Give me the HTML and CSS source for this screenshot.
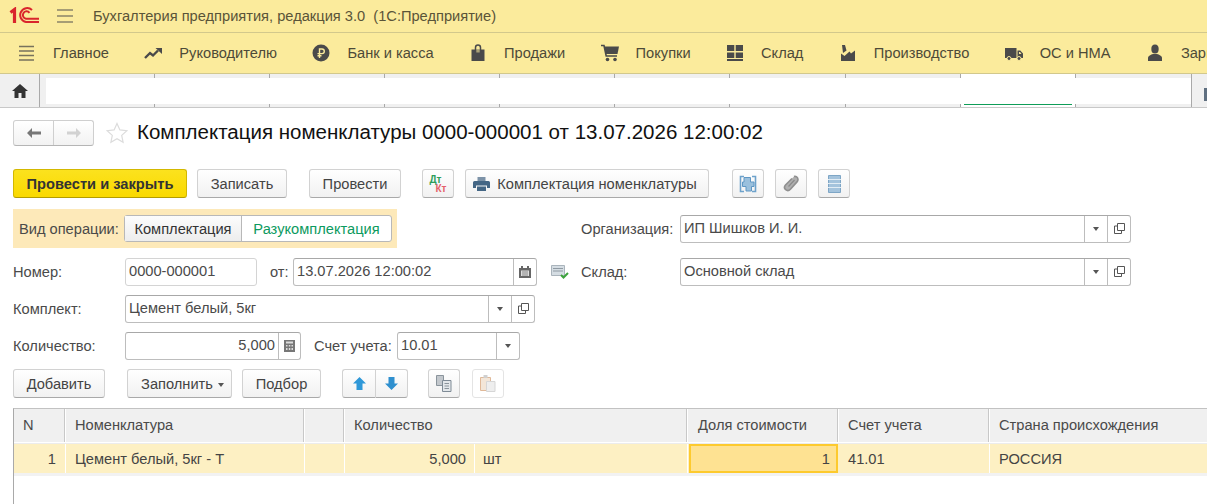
FILE: index.html
```html
<!DOCTYPE html>
<html lang="ru">
<head>
    <meta charset="UTF-8">
    <title>Комплектация номенклатуры</title>
    <link rel="stylesheet" href="styles.css">
</head>
<body>
    <div class="app-head">
        <svg class="logo" width="32" height="18" viewBox="0 0 32 18">
            <path d="M1.500 5.500L5.500 2.500V16" fill="none" stroke="#d9252c" stroke-width="3.200"/>
            <path d="M23 3A7 7 0 1 0 17 15H30" fill="none" stroke="#d9252c" stroke-width="2"/>
            <path d="M20.500 5.800A3.700 3.700 0 1 0 17 11.700H30" fill="none" stroke="#d9252c" stroke-width="2"/>
        </svg>
        <svg class="head-menu" width="16" height="14" viewBox="0 0 16 14">
            <path d="M0 1h16M0 7h16M0 13h16" stroke="#8b8468" stroke-width="1.600"/>
        </svg>
        <span class="app-title">Бухгалтерия предприятия, редакция 3.0&nbsp; (1С:Предприятие)</span>
    </div>

    <div class="sections">
        <a class="sec" href="#">
            <svg width="18" height="16" viewBox="0 0 18 16"><path d="M1 1.500h15M1 6h15M1 10.500h15M1 15h15" stroke="#77725c" stroke-width="1.600"/></svg>
            Главное
        </a>
        <a class="sec" href="#">
            <svg width="18" height="14" viewBox="0 0 18 14"><path d="M1 12l5-5 3 2.500 5-5" fill="none" stroke="#4a4a4a" stroke-width="2.400"/><path d="M11.500 2H18v6z" fill="#4a4a4a"/></svg>
            Руководителю
        </a>
        <a class="sec" href="#">
            <svg width="18" height="18" viewBox="0 0 18 18"><circle cx="9" cy="9" r="8.500" fill="#4a4a4a"/><path d="M7.500 14V5H10a2.300 2.300 0 0 1 0 4.600H5.500M5.500 11.800h4" fill="none" stroke="#fbeb9c" stroke-width="1.400"/></svg>
            Банк и касса
        </a>
        <a class="sec" href="#">
            <svg width="18" height="18" viewBox="0 0 18 18"><path d="M2.500 5.500h13V17h-13z" fill="#4a4a4a"/><path d="M6.500 9V3.500a2.500 2.500 0 0 1 5 0V9" fill="none" stroke="#4a4a4a" stroke-width="1.500"/><path d="M7.300 5.500h3.400v3h-3.400z" fill="#fbeb9c" opacity=".55"/></svg>
            Продажи
        </a>
        <a class="sec" href="#">
            <svg width="18" height="18" viewBox="0 0 18 18"><path d="M3 2.500h15l-1.500 7.500H5z" fill="#4a4a4a"/><path d="M0 1.500h3l2.200 10.500H16" fill="none" stroke="#4a4a4a" stroke-width="1.600"/><circle cx="6.500" cy="15.500" r="1.800" fill="#4a4a4a"/><circle cx="14" cy="15.500" r="1.800" fill="#4a4a4a"/></svg>
            Покупки
        </a>
        <a class="sec" href="#">
            <svg width="18" height="18" viewBox="0 0 18 18"><path d="M1 1h7.300v6H1zM9.700 1H17v6H9.700zM1 8.400h7.300v5.600H1zM9.700 8.400H17v5.600H9.700z" fill="#4a4a4a"/><path d="M1 16h16" stroke="#4a4a4a" stroke-width="2"/></svg>
            Склад
        </a>
        <a class="sec" href="#">
            <svg width="18" height="18" viewBox="0 0 18 18"><path d="M2 17V9.500L5.500 12l5-4.500 1.500 2 4-3V17z" fill="#4a4a4a"/><path d="M3 1l3 0 1.500 5.500L4 9z" fill="#4a4a4a"/></svg>
            Производство
        </a>
        <a class="sec" href="#">
            <svg width="18" height="18" viewBox="0 0 18 18"><path d="M0 4h11.500v10H0zM12.500 6.500h2.800L18 9.500V14h-5.500z" fill="#4a4a4a"/><path d="M14 8h1l1.500 2H14z" fill="#fbeb9c"/><circle cx="4" cy="14.500" r="2" fill="#4a4a4a" stroke="#fbeb9c"/><circle cx="14" cy="14.500" r="2" fill="#4a4a4a" stroke="#fbeb9c"/></svg>
            ОС и НМА
        </a>
        <a class="sec" href="#">
            <svg width="18" height="18" viewBox="0 0 18 18"><ellipse cx="9" cy="5" rx="3.700" ry="4.500" fill="#4a4a4a"/><path d="M2 17v-3c0-2 3-3.500 5-4h4c2 .5 5 2 5 4v3z" fill="#4a4a4a"/></svg>
            Зарплата и кадры
        </a>
    </div>

    <div class="tabbar">
        <div class="tab-home">
            <svg width="16" height="14" viewBox="0 0 16 14"><path d="M8 0L0 7h2.500v7h4V9h3v5h4V7H16z" fill="#333"/></svg>
        </div>
        <div class="tab-gap"></div>
        <div class="tab-list">
            <div class="tick-row">
                <i class="tick t1"></i><i class="tick"></i><i class="tick"></i><i class="tick"></i><i class="tick"></i><i class="tick"></i><i class="tick"></i><i class="tick"></i><i class="tick tick-on"></i><i class="tick tick-last"></i>
            </div>
            <div class="tab-white"></div>
            <div class="tick-row">
                <i class="tick t1"></i><i class="tick"></i><i class="tick"></i><i class="tick"></i><i class="tick"></i><i class="tick"></i><i class="tick"></i><i class="tick"></i><i class="tick tick-on tick-green"></i><i class="tick tick-last"></i>
            </div>
        </div>
        <div class="tab-end"><i class="tab-end-mark"></i></div>
    </div>

    <div class="form">
        <div class="title-row">
            <div class="nav-btns">
                <span class="nav-btn">
                    <svg width="14" height="10" viewBox="0 0 14 10"><path d="M5 0v3.500h9v3H5V10L0 5z" fill="#777"/></svg>
                </span>
                <span class="nav-btn">
                    <svg width="14" height="10" viewBox="0 0 14 10"><path d="M9 0v3.500H0v3h9V10l5-5z" fill="#d2d2d2"/></svg>
                </span>
            </div>
            <svg class="star" width="22" height="22" viewBox="0 0 22 22"><path d="M11 1.500l2.900 6.400 6.900.8-5.100 4.700 1.400 6.900L11 16.800l-6.100 3.500 1.400-6.900L1.200 8.700l6.900-.8z" fill="#fff" stroke="#dcdcdc" stroke-width="1.200"/></svg>
            <h1 class="doc-title">Комплектация номенклатуры 0000-000001 от 13.07.2026 12:00:02</h1>
        </div>

        <div class="cmd-row">
            <a class="btn btn-main w-post-close" href="#">Провести и закрыть</a>
            <a class="btn w-save" href="#">Записать</a>
            <a class="btn w-post" href="#">Провести</a>
            <a class="btn w-dtkt" href="#"><span class="dtkt"><span class="dt">Дт</span><span class="kt">Кт</span></span></a>
            <a class="btn w-print" href="#">
                <svg width="17" height="14" viewBox="0 0 17 14"><path d="M4.500 0h8v4h-8z" fill="#7d93a8"/><path d="M1.500 4h14a1.500 1.500 0 0 1 1.500 1.500V11h-3V8.500H3V11H0V5.500A1.500 1.500 0 0 1 1.500 4z" fill="#446685"/><path d="M4 9.500h9V14H4z" fill="#446685"/></svg>
                Комплектация номенклатуры
            </a>
            <a class="btn w-icon mgl-link" href="#">
                <svg width="18" height="18" viewBox="0 0 18 18"><path d="M5 1.500H1.500v15H5M13 1.500h3.500v15H13" fill="none" stroke="#6ea2cb" stroke-width="1.600"/><path d="M5 2.500h6.500v4.500H15v4.500h-2.500V16H7v-4.500H3.500V7H5z" fill="#9ac0dd" stroke="#5f97c4"/></svg>
            </a>
            <a class="btn w-icon mgl-clip" href="#">
                <svg width="17" height="17" viewBox="0 0 17 17"><path d="M11 1.500c1.800-.6 4 .8 4 3 0 1-.5 1.800-1 2.400l-6.600 7.300c-1.200 1.300-3.200 1.700-4.700.5-1.500-1.300-1.300-3.400-.2-4.700L9 3.500" fill="#b0b0b0" stroke="#8f8f8f" stroke-width="1.600"/><path d="M11.500 5L5.500 11.500" stroke="#8a8a8a" stroke-width="1.200"/></svg>
            </a>
            <a class="btn w-icon mgl-list" href="#">
                <svg width="13" height="18" viewBox="0 0 13 18"><path d="M.5.500h12v17H.5z" fill="#a4c3dc" stroke="#7ea6c6"/><path d="M0 4.500h13M0 8.500h13M0 12.500h13" stroke="#e2edf5"/></svg>
            </a>
        </div>

        <div class="row row-op">
            <div class="op-box">
                <span class="op-label">Вид операции:</span>
                <div class="toggle">
                    <span class="toggle-item toggle-on">Комплектация</span>
                    <span class="toggle-item toggle-off">Разукомплектация</span>
                </div>
            </div>
            <span class="lbl lbl-right lbl-org">Организация:</span>
            <div class="field w-wide">
                <span class="field-text">ИП Шишков И. И.</span>
                <span class="field-btn"><i class="caret"></i></span>
                <span class="field-btn"><svg width="11" height="11" viewBox="0 0 11 11"><path d="M3.500.5h7v7h-7zM3.500 3H.5v7.500h7V8" fill="none" stroke="#555"/></svg></span>
            </div>
        </div>

        <div class="row row-num">
            <span class="lbl lbl-left">Номер:</span>
            <div class="field w-num"><span class="field-text">0000-000001</span></div>
            <span class="lbl lbl-ot">от:</span>
            <div class="field w-date">
                <span class="field-text">13.07.2026 12:00:02</span>
                <span class="field-btn field-btn-cal">
                    <svg width="12" height="12" viewBox="0 0 12 12"><path d="M0 2h12v10H0z" fill="#666"/><path d="M2 4.500h8v5.500H2z" fill="#ddd"/><path d="M3 0v3M9 0v3" stroke="#666" stroke-width="2"/><path d="M4 5v5M6 5v5M8 5v5" stroke="#888"/></svg>
                </span>
            </div>
            <svg class="status" width="18" height="15" viewBox="0 0 18 15"><path d="M.5 1.500h13v10H.5z" fill="#d5dde3" stroke="#aab4bc"/><path d="M2 4.500h10M2 7h10" stroke="#8f9aa3"/><path d="M10 11l2.500 2.500L17 9" fill="none" stroke="#3da33d" stroke-width="2"/></svg>
            <span class="lbl lbl-right lbl-sklad">Склад:</span>
            <div class="field w-wide">
                <span class="field-text">Основной склад</span>
                <span class="field-btn"><i class="caret"></i></span>
                <span class="field-btn"><svg width="11" height="11" viewBox="0 0 11 11"><path d="M3.500.5h7v7h-7zM3.500 3H.5v7.500h7V8" fill="none" stroke="#555"/></svg></span>
            </div>
        </div>

        <div class="row row-kit">
            <span class="lbl lbl-left">Комплект:</span>
            <div class="field w-kit">
                <span class="field-text">Цемент белый, 5кг</span>
                <span class="field-btn"><i class="caret"></i></span>
                <span class="field-btn"><svg width="11" height="11" viewBox="0 0 11 11"><path d="M3.500.5h7v7h-7zM3.500 3H.5v7.500h7V8" fill="none" stroke="#555"/></svg></span>
            </div>
        </div>

        <div class="row row-qty">
            <span class="lbl lbl-left">Количество:</span>
            <div class="field w-qty">
                <span class="field-text field-right">5,000</span>
                <span class="field-btn field-btn-calc">
                    <svg width="11" height="12" viewBox="0 0 11 12"><path d="M0 0h11v12H0z" fill="#777"/><path d="M2 1.500h7v2H2zM2 5h1.500v1.500H2zM4.800 5h1.500v1.500H4.800zM7.500 5H9v1.500H7.500zM2 8h1.500v2H2zM4.800 8h1.500v2H4.800zM7.500 8H9v2H7.500z" fill="#ddd"/></svg>
                </span>
            </div>
            <span class="lbl lbl-acc">Счет учета:</span>
            <div class="field w-acc">
                <span class="field-text">10.01</span>
                <span class="field-btn"><i class="caret"></i></span>
            </div>
        </div>

        <div class="row row-act">
            <a class="btn w-add" href="#">Добавить</a>
            <a class="btn w-fill" href="#">Заполнить<i class="caret caret-small"></i></a>
            <a class="btn w-pick" href="#">Подбор</a>
            <div class="btn-group">
                <a class="btn w-arrow" href="#"><svg width="13" height="13" viewBox="0 0 13 13"><path d="M6.500 0L13 6.500H9.500V13h-6V6.500H0z" fill="#2f98d8"/></svg></a>
                <a class="btn w-arrow" href="#"><svg width="13" height="13" viewBox="0 0 13 13"><path d="M6.500 13L13 6.500H9.500V0h-6v6.500H0z" fill="#2f90cf"/></svg></a>
            </div>
            <a class="btn w-icon-s mgl-copy" href="#">
                <svg width="16" height="17" viewBox="0 0 16 17"><path d="M.5.500h7v10h-7z" fill="#c3c8cd" stroke="#8a949c"/><path d="M6.500 5.500h8.500v11H6.500z" fill="#e3e7ea" stroke="#7f8b96"/><path d="M8.500 8.500h4.500M8.500 11h4.500M8.500 13.500h4.500" stroke="#8a949c"/></svg>
            </a>
            <a class="btn w-icon-s btn-off mgl-paste" href="#">
                <svg width="16" height="17" viewBox="0 0 16 17"><path d="M.5 2.500h10v13H.5z" fill="#f3e6d8" stroke="#e0b999"/><path d="M3.500 0h4v3h-4z" fill="#d0d0d0"/><path d="M6.500 6.500h8.500v10H6.500z" fill="#eeeeee" stroke="#d6d6d6"/></svg>
            </a>
        </div>

        <div class="grid">
            <div class="grid-head">
                <div class="col c-n">N</div>
                <div class="col c-name">Номенклатура</div>
                <div class="col c-blank"></div>
                <div class="col c-qty-h">Количество</div>
                <div class="col c-share c-share-h">Доля стоимости</div>
                <div class="col c-acc">Счет учета</div>
                <div class="col c-country">Страна происхождения</div>
            </div>
            <div class="grid-line">
                <div class="cell c-n cell-right">1</div>
                <div class="cell c-name">Цемент белый, 5кг - Т</div>
                <div class="cell c-blank"></div>
                <div class="cell c-qty cell-right">5,000</div>
                <div class="cell c-unit">шт</div>
                <div class="cell cell-right cell-active">1</div>
                <div class="cell c-acc">41.01</div>
                <div class="cell c-country">РОССИЯ</div>
            </div>
            <div class="grid-band"></div>
        </div>
    </div>
</body>
</html>
```

FILE: styles.css
```css
* {
    box-sizing: border-box;
}

html,
body {
    height: 100%;
}

body {
    margin: 0;
    overflow: hidden;
    font-family: "Liberation Sans", Arial, sans-serif;
    font-size: 14.65px;
    color: #4a4a4a;
    background-color: #fff;
}

a {
    color: inherit;
    text-decoration: none;
}

/* head */
.app-head {
    display: flex;
    align-items: center;
    height: 33px;
    border-bottom: 1px solid #d2c88c;
    background-color: #fbeb9c;
}

.logo {
    margin-left: 9px;
}

.head-menu {
    margin-left: 16px;
}

.app-title {
    margin-left: 20px;
    color: #5a5438;
}

.sections {
    display: flex;
    align-items: center;
    gap: 35.4px;
    height: 41px;
    padding-left: 18px;
    border-bottom: 1px solid #d2c88c;
    background-color: #fbeb9c;
    white-space: nowrap;
    box-shadow: 0 1px 0 #e6e6e6;
}

.sec {
    display: flex;
    align-items: center;
    flex-shrink: 0;
    gap: 17px;
    color: #4d4a38;
}

/* tabs */
.tabbar {
    display: flex;
    height: 34px;
    border-bottom: 1px solid #c8c8c8;
    background-color: #f0f0f0;
}

.tab-home {
    display: flex;
    align-items: center;
    justify-content: center;
    width: 41px;
    border-right: 1px solid #a9a9a9;
}

.tab-gap {
    width: 6px;
}

.tab-list {
    display: flex;
    flex-direction: column;
    width: 1145px;
}

.tick-row {
    display: flex;
    flex: 1;
}

.tab-white {
    height: 26px;
    background-color: #fff;
}

.tick {
    width: 115.3px;
    border-right: 1px solid #a9a9a9;
}

.t1 {
    width: 109px;
}

.tick-last {
    border-right: 0;
}

.tick-on {
    background-color: #fff;
}

.tick-green {
    background: linear-gradient(#0f9d58, #0f9d58) no-repeat center top / 108px 1px #fff;
}

.tab-end {
    flex: 1;
    border-left: 1px solid #a9a9a9;
    padding: 14px 0 0 12px;
}

.tab-end-mark {
    display: block;
    width: 3px;
    height: 13px;
    background-color: #5f6f80;
}

/* form */
.form {
    padding: 12px 0 0 13px;
}

.title-row {
    display: flex;
    align-items: center;
    height: 26px;
}

.nav-btns {
    display: flex;
    width: 81px;
    height: 26px;
    border: 1px solid #cfcfcf;
    border-bottom-color: #b5b5b5;
    border-radius: 3px;
    background: linear-gradient(#fff, #f2f2f2);
}

.nav-btn {
    display: flex;
    align-items: center;
    justify-content: center;
    flex: 1;
}

.nav-btn:first-child {
    border-right: 1px solid #cfcfcf;
}

.star {
    margin-left: 12px;
}

.doc-title {
    margin: 0 0 2px 9px;
    font-size: 20.53px;
    font-weight: normal;
    color: #111;
    white-space: nowrap;
}

.cmd-row {
    display: flex;
    margin-top: 23px;
}

.btn {
    display: flex;
    align-items: center;
    justify-content: center;
    flex-shrink: 0;
    height: 29px;
    border: 1px solid #d2d2d2;
    border-bottom-color: #a9a9a9;
    border-radius: 3px;
    background: linear-gradient(#fff, #f1f1f1);
    color: #444;
    white-space: nowrap;
}

.btn-main {
    border-color: #d3b800;
    border-bottom-color: #b39c00;
    background: linear-gradient(#fbe21e, #fad900);
    color: #333;
    font-weight: bold;
}

.btn-off {
    border-color: #e4e4e4;
    background: #fff;
}

.w-post-close {
    width: 174px;
}

.w-save {
    width: 90px;
    margin-left: 10px;
}

.w-post {
    width: 92px;
    margin-left: 22px;
}

.w-dtkt {
    width: 32px;
    margin-left: 21px;
}

.w-print {
    gap: 7px;
    width: 244px;
    margin-left: 11px;
    padding-right: 4px;
}

.w-icon {
    width: 32px;
}

.mgl-link {
    margin-left: 23px;
}

.mgl-clip,
.mgl-list {
    margin-left: 11px;
}

.dtkt {
    display: flex;
    flex-direction: column;
    font-size: 10px;
    font-weight: bold;
    line-height: 9px;
}

.dt {
    color: #2f9e5b;
}

.kt {
    margin-left: 6px;
    color: #e4626a;
}

/* rows */
.row {
    display: flex;
    align-items: center;
}

.row-op {
    height: 39px;
    margin-top: 11px;
}

.row-num {
    height: 29px;
    margin-top: 9px;
}

.row-kit {
    height: 29px;
    margin-top: 8px;
}

.row-qty {
    height: 29px;
    margin-top: 8px;
}

.row-act {
    height: 29px;
    margin-top: 9px;
}

.op-box {
    display: flex;
    align-items: center;
    flex-shrink: 0;
    width: 384px;
    height: 39px;
    padding-left: 6px;
    background-color: #fde9b9;
}

.op-label {
    width: 105px;
    white-space: nowrap;
}

.toggle {
    display: flex;
    width: 268px;
    height: 27px;
    border: 1px solid #b8b8b8;
    border-radius: 3px;
    background-color: #fff;
}

.toggle-item {
    display: flex;
    align-items: center;
    justify-content: center;
}

.toggle-on {
    width: 117px;
    border-right: 1px solid #b8b8b8;
    background: linear-gradient(#fcfcfc, #ededed);
    color: #333;
}

.toggle-off {
    flex: 1;
    color: #0c9a5e;
}

.lbl {
    flex-shrink: 0;
    white-space: nowrap;
}

.lbl-left {
    width: 112px;
}

.lbl-right {
    width: 99px;
}

.lbl-org {
    margin-left: 184px;
}

.lbl-sklad {
    margin-left: 12px;
}

.lbl-ot {
    width: 36px;
    padding-left: 13px;
}

.lbl-acc {
    width: 96px;
    padding-left: 13px;
}

.field {
    display: flex;
    flex-shrink: 0;
    height: 28px;
    border: 1px solid #bdbdbd;
    border-top-color: #a8a8a8;
    border-radius: 3px;
    background-color: #fff;
}

.field-text {
    flex: 1;
    padding-left: 3px;
    line-height: 25px;
    overflow: hidden;
    white-space: nowrap;
}

.field-right {
    padding-right: 3px;
    text-align: right;
}

.field-btn {
    display: flex;
    align-items: center;
    justify-content: center;
    width: 23px;
    border-left: 1px solid #bdbdbd;
}

.field-btn-calc {
    width: 22px;
}

.w-wide {
    width: 451px;
}

.w-num {
    width: 132px;
    border-color: #d4d4d4;
}

.w-date {
    width: 244px;
}

.status {
    margin-left: 14px;
}

.w-kit {
    width: 410px;
}

.w-qty {
    width: 176px;
}

.w-acc {
    width: 123px;
}

.caret {
    display: block;
    width: 0;
    height: 0;
    border-top: 4px solid #555;
    border-right: 3px solid transparent;
    border-left: 3px solid transparent;
}

.caret-small {
    margin: 3px 0 0 5px;
}

.w-add {
    width: 92px;
}

.w-fill {
    width: 105px;
    margin-left: 22px;
    padding-left: 6px;
}

.w-pick {
    width: 79px;
    margin-left: 10px;
}

.btn-group {
    display: flex;
    margin-left: 21px;
}

.w-arrow {
    width: 33px;
}

.w-arrow:first-child {
    border-right: 0;
    border-radius: 3px 0 0 3px;
}

.w-arrow:last-child {
    border-radius: 0 3px 3px 0;
}

.w-icon-s {
    width: 32px;
}

.mgl-copy {
    margin-left: 20px;
}

.mgl-paste {
    margin-left: 12px;
}

/* table */
.grid {
    height: 96px;
    margin-top: 10px;
    border-top: 1px solid #c2c2c2;
    border-left: 1px solid #a9a9a9;
}

.grid-head,
.grid-line {
    display: flex;
}

.grid-head {
    height: 34px;
    border-bottom: 1px solid #fff;
    background-color: #f0f0f0;
}

.col {
    display: flex;
    align-items: center;
    flex-shrink: 0;
    padding-left: 9px;
    padding-bottom: 1px;
    border-right: 1px solid #fff;
    box-shadow: inset -1px 0 0 #c8c8c8;
}

.grid-line {
    height: 30px;
    border-top: 1px solid #ececec;
    background-color: #fdf0c3;
}

.cell {
    display: flex;
    align-items: center;
    flex-shrink: 0;
    padding-left: 9px;
    border-right: 1px solid #fff;
    color: #444;
}

.cell-right {
    justify-content: flex-end;
    padding-right: 9px;
}

.c-n {
    width: 52px;
}

.c-name {
    width: 239px;
}

.c-blank {
    width: 40px;
}

.c-qty-h {
    width: 343px;
}

.c-qty {
    width: 130px;
    padding-right: 8px;
}

.c-unit {
    width: 213px;
    padding-left: 8px;
}

.c-share {
    width: 151px;
}

.c-share-h {
    padding-left: 10px;
}

.c-acc {
    width: 151px;
}

.c-country {
    flex: 1;
    border-right: 0;
    box-shadow: none;
}

.cell-active {
    width: 149px;
    margin: 0 1px;
    padding-right: 6px;
    border: 2px solid #fdca2e;
    background-color: #fee292;
}

.grid-band {
    height: 3px;
    background-color: #f2f2f2;
}
```
